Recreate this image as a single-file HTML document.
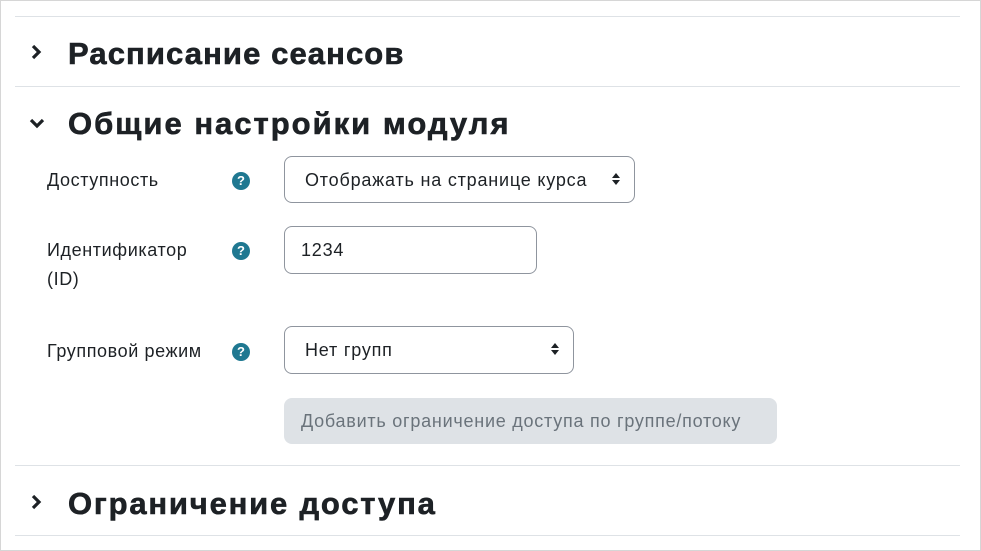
<!DOCTYPE html>
<html><head><meta charset="utf-8"><style>
body{margin:0;width:981px;height:551px;background:#fff;font-family:"Liberation Sans",sans-serif;color:#1d2125;position:relative;overflow:hidden}
.frame{position:absolute;left:0;top:0;width:979px;height:549px;border:1px solid #d6d6d6}
.hr{position:absolute;left:15px;width:945px;height:1px;background:#dee2e6}
.h{position:absolute;left:68px;font-size:31px;font-weight:bold;letter-spacing:1.3px;white-space:nowrap;-webkit-text-stroke:0.6px #1d2125}
.chev{position:absolute;left:29px}
.lbl{position:absolute;left:47px;font-size:18px;line-height:29px;letter-spacing:0.6px;white-space:nowrap}
.q{position:absolute;width:18px;height:18px;border-radius:50%;background:#1f7891;color:#fff;font-size:13px;font-weight:bold;text-align:center;line-height:18px}
.box{position:absolute;border:1px solid #8f959e;border-radius:8px;font-size:18px;letter-spacing:0.8px;box-sizing:border-box;padding-left:20px;line-height:46px}
.arr{position:absolute;right:13px;top:15px}
.btn{position:absolute;left:284px;top:398px;width:493px;height:46px;background:#dee2e6;border-radius:8px;color:#6a737b;font-size:18px;letter-spacing:0.75px;line-height:46px;padding-left:17px;box-sizing:border-box;white-space:nowrap}
</style></head><body>
<div class="frame"></div>
<div class="hr" style="top:16px"></div>
<div class="hr" style="top:86px"></div>
<div class="hr" style="top:465px"></div>
<div class="hr" style="top:535px"></div>
<svg class="chev" style="top:44px" width="16" height="16" viewBox="0 0 16 16"><path d="M4 2l6 6-6 6" fill="none" stroke="#1d2125" stroke-width="3.2"/></svg>
<div class="h" style="top:36px;letter-spacing:1.1px">Расписание сеансов</div>
<svg class="chev" style="top:116px" width="18" height="16" viewBox="0 0 18 16"><path d="M2 4l6 6 6-6" fill="none" stroke="#1d2125" stroke-width="3.2"/></svg>
<div class="h" style="top:106px;letter-spacing:2px">Общие настройки модуля</div>
<div class="lbl" style="top:166px">Доступность</div>
<div class="q" style="left:232px;top:172px">?</div>
<div class="box" style="left:284px;top:156px;width:351px;height:47px">Отображать на странице курса<svg class="arr" width="10" height="14" viewBox="0 0 10 14"><path d="M1 6L5 1 9 6zM1 8L5 13 9 8z" fill="#1d2125"/></svg></div>
<div class="lbl" style="top:236px">Идентификатор<br>(ID)</div>
<div class="q" style="left:232px;top:242px">?</div>
<div class="box" style="left:284px;top:226px;width:253px;height:48px;padding-left:16px">1234</div>
<div class="lbl" style="top:337px">Групповой режим</div>
<div class="q" style="left:232px;top:343px">?</div>
<div class="box" style="left:284px;top:326px;width:290px;height:48px">Нет групп<svg class="arr" width="10" height="14" viewBox="0 0 10 14"><path d="M1 6L5 1 9 6zM1 8L5 13 9 8z" fill="#1d2125"/></svg></div>
<div class="btn">Добавить ограничение доступа по группе/потоку</div>
<svg class="chev" style="top:494px" width="16" height="16" viewBox="0 0 16 16"><path d="M4 2l6 6-6 6" fill="none" stroke="#1d2125" stroke-width="3.2"/></svg>
<div class="h" style="top:486px;letter-spacing:1.8px">Ограничение доступа</div>
</body></html>
